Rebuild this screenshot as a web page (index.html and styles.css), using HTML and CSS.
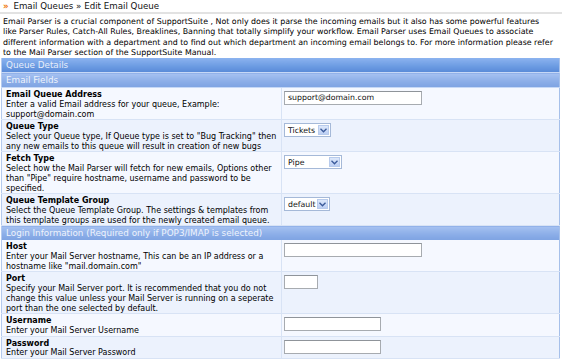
FILE: index.html
```html
<!DOCTYPE html>
<html lang="en">
<head>
    <meta charset="UTF-8">
    <title>Edit Email Queue</title>
    <link rel="stylesheet" href="styles.css">
</head>
<body>
    <div class="breadcrumb"><span class="raquo">&raquo;</span> Email Queues &raquo; Edit Email Queue</div>

    <p class="intro">Email Parser is a crucial component of SupportSuite , Not only does it parse the incoming emails but it also has some powerful features<br>
    like Parser Rules, Catch-All Rules, Breaklines, Banning that totally simplify your workflow. Email Parser uses Email Queues to associate<br>
    different information with a department and to find out which department an incoming email belongs to. For more information please refer<br>
    to the Mail Parser section of the SupportSuite Manual.</p>

    <table class="form">
        <tr><td colspan="2" class="head">Queue Details</td></tr>
        <tr><td colspan="2" class="subhead">Email Fields</td></tr>
        <tr class="row1">
            <td class="label"><b>Email Queue Address</b><br>Enter a valid Email address for your queue, Example: support@domain.com</td>
            <td class="field"><div class="input wide">support@domain.com</div></td>
        </tr>
        <tr class="row2">
            <td class="label"><b>Queue Type</b><br>Select your Queue type, If Queue type is set to "Bug Tracking" then any new emails to this queue will result in creation of new bugs</td>
            <td class="field"><div class="select s-tickets"><span>Tickets</span><i><svg width="7" height="5" viewBox="0 0 7 5"><path d="M0.5 0.8 L3.5 3.8 L6.5 0.8" fill="none" stroke="#3a5a9a" stroke-width="1.3"/></svg></i></div></td>
        </tr>
        <tr class="row1">
            <td class="label"><b>Fetch Type</b><br>Select how the Mail Parser will fetch for new emails, Options other than "Pipe" require hostname, username and password to be specified.</td>
            <td class="field"><div class="select s-pipe"><span>Pipe</span><i><svg width="7" height="5" viewBox="0 0 7 5"><path d="M0.5 0.8 L3.5 3.8 L6.5 0.8" fill="none" stroke="#3a5a9a" stroke-width="1.3"/></svg></i></div></td>
        </tr>
        <tr class="row2">
            <td class="label"><b>Queue Template Group</b><br>Select the Queue Template Group. The settings &amp; templates from this template groups are used for the newly created email queue.</td>
            <td class="field"><div class="select s-default"><span>default</span><i><svg width="7" height="5" viewBox="0 0 7 5"><path d="M0.5 0.8 L3.5 3.8 L6.5 0.8" fill="none" stroke="#3a5a9a" stroke-width="1.3"/></svg></i></div></td>
        </tr>
        <tr><td colspan="2" class="subhead login">Login Information (Required only if POP3/IMAP is selected)</td></tr>
        <tr class="row1">
            <td class="label"><b>Host</b><br>Enter your Mail Server hostname, This can be an IP address or a hostname like "mail.domain.com"</td>
            <td class="field"><div class="input wide"></div></td>
        </tr>
        <tr class="row2">
            <td class="label"><b>Port</b><br>Specify your Mail Server port. It is recommended that you do not change this value unless your Mail Server is running on a seperate port than the one selected by default.</td>
            <td class="field"><div class="input tiny"></div></td>
        </tr>
        <tr class="row1">
            <td class="label"><b>Username</b><br>Enter your Mail Server Username</td>
            <td class="field"><div class="input mid"></div></td>
        </tr>
        <tr class="row2">
            <td class="label"><b>Password</b><br>Enter your Mail Server Password</td>
            <td class="field"><div class="input mid"></div></td>
        </tr>
    </table>
</body>
</html>
```

FILE: styles.css
```css
body {
    margin: 0;
    background-color: #fff;
    font-family: "DejaVu Sans", Verdana, sans-serif;
    font-size: 8px;
    color: #000;
}
.breadcrumb {
    font-size: 8.7px;
    line-height: 10px;
    padding: 1px 0 1px 3px;
    border-bottom: 2px solid #e2e2e2;
    color: #111;
}
.raquo {
    color: #f07a10;
    font-weight: bold;
    margin-right: 2px;
}
.intro {
    margin: 3px 0 0 3px;
    font-size: 7.9px;
    line-height: 10.3px;
    white-space: nowrap;
}
.form {
    margin: 0 0 0 1px;
    width: 559px;
    border-collapse: collapse;
    border-left: 1px solid #b4caee;
    border-right: 1px solid #a6c0ea;
}
.form td {
    padding: 0;
    vertical-align: top;
}
.head {
    height: 14px;
    padding: 0 0 0 4px !important;
    background: linear-gradient(#8cb3ef, #6b9be2 60%, #5a8bd8);
    color: #e6edfa;
    font-size: 8.8px;
    line-height: 14px;
}
.subhead {
    height: 14px;
    padding: 0 0 0 4px !important;
    background: linear-gradient(#a6c2f1, #8caee8 55%, #7ea3e2);
    border-top: 1px solid #c6d8f6;
    border-bottom: 1px solid #c6d8f6;
    color: #eef3fc;
    font-size: 8.8px;
    line-height: 14px;
}
.subhead.login {
    border-bottom: none;
}
.row1 {
    background-color: #f5f8ff;
}
.row2 {
    background-color: #ecf2fd;
}
.row1 td, .row2 td {
    border-bottom: 1px solid #d8e3f5;
}
.label {
    width: 273px;
    padding: 2px 2px 0 4px !important;
    line-height: 9.7px;
    border-right: 1px solid #d8e3f5;
}
.field {
    padding: 3px 0 0 2px !important;
}
.input {
    box-sizing: border-box;
    height: 14px;
    border: 1px solid #a7abb0;
    border-top-color: #8f949a;
    background-color: #fff;
    padding: 0 3px;
    line-height: 12px;
    font-size: 7.8px;
    color: #111;
}
.wide {
    width: 138px;
}
.mid {
    width: 97px;
}
.tiny {
    width: 34px;
}
.select {
    box-sizing: border-box;
    display: flex;
    height: 14px;
    border: 1px solid #a5b9d8;
    background-color: #fff;
    padding: 1px;
    font-size: 7.8px;
    color: #111;
}
.select span {
    flex: 1;
    padding-left: 2px;
    line-height: 11px;
}
.select i {
    display: flex;
    align-items: center;
    justify-content: center;
    width: 11px;
    background: linear-gradient(#dde8fb, #bccff3);
    border: 1px solid #b8cbec;
    box-sizing: border-box;
}
.s-tickets {
    width: 47px;
}
.s-pipe {
    width: 58px;
}
.s-default {
    width: 46px;
}
```
